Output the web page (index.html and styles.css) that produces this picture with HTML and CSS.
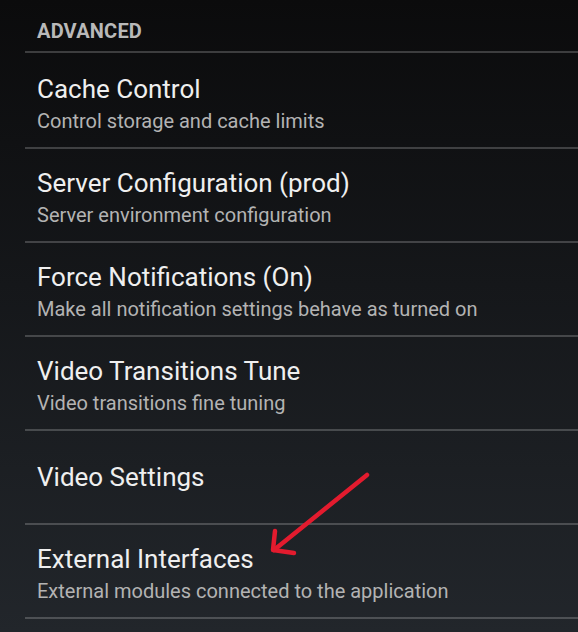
FILE: index.html
```html
<!DOCTYPE html>
<html lang="en">
<head>
<meta charset="utf-8">
<link rel="stylesheet" href="styles.css">
</head>
<body>
<div class="screen">
  <div class="list">
    <div class="header"><span>ADVANCED</span></div>
    <div class="row first">
      <div class="title">Cache Control</div>
      <div class="summary">Control storage and cache limits</div>
    </div>
    <div class="row">
      <div class="title">Server Configuration (prod)</div>
      <div class="summary">Server environment configuration</div>
    </div>
    <div class="row">
      <div class="title">Force Notifications (On)</div>
      <div class="summary">Make all notification settings behave as turned on</div>
    </div>
    <div class="row">
      <div class="title">Video Transitions Tune</div>
      <div class="summary">Video transitions fine tuning</div>
    </div>
    <div class="row single">
      <div class="title">Video Settings</div>
    </div>
    <div class="row">
      <div class="title">External Interfaces</div>
      <div class="summary">External modules connected to the application</div>
    </div>
  </div>
  <svg class="arrow" width="578" height="632" viewBox="0 0 578 632">
    <g fill="none" stroke="#e31b2e" stroke-width="4.5" stroke-linecap="round" stroke-linejoin="round">
      <path d="M367 475 L274 550"/>
      <path d="M275 531 L273 550 L294 553"/>
    </g>
  </svg>
</div>
</body>
</html>
```
FILE: styles.css
```css
html, body {
  margin: 0;
  padding: 0;
}
body {
  width: 578px;
  height: 632px;
  overflow: hidden;
  background: linear-gradient(to bottom, #0b0b0c 0%, #15171a 45%, #22262b 100%);
  font-family: Roboto, "Noto Sans", sans-serif;
}
.screen {
  position: relative;
  width: 578px;
  height: 632px;
}
.list {
  padding-left: 25px;
}
.header {
  height: 53px;
  box-sizing: border-box;
  padding: 19px 0 0 12px;
  border-bottom: 2px solid rgba(255, 255, 255, 0.2);
  font-size: 20px;
  font-weight: 700;
  line-height: 24px;
  color: #b9b9b9;
  letter-spacing: 0.2px;
}
.row {
  height: 94px;
  box-sizing: border-box;
  padding: 19px 0 0 12px;
  border-bottom: 2px solid rgba(255, 255, 255, 0.2);
}
.row.first {
  margin-top: 2px;
}
.row.single {
  display: flex;
  align-items: center;
  padding-top: 0;
}
.title {
  font-size: 26px;
  line-height: 30px;
  color: #efefef;
}
.summary {
  margin-top: 5px;
  font-size: 20px;
  line-height: 24px;
  color: #b3b3b3;
}
.arrow {
  position: absolute;
  left: 0;
  top: 0;
  pointer-events: none;
}
```
